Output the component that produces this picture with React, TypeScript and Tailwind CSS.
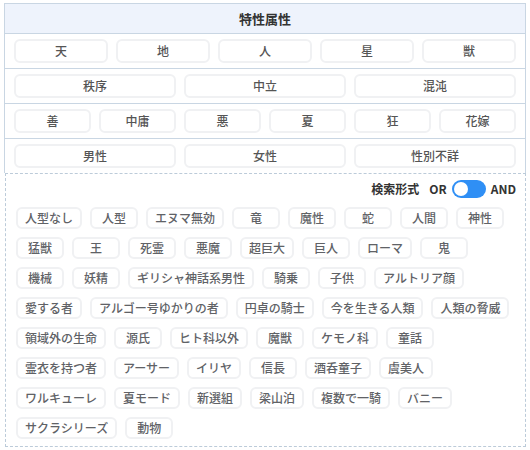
import React, { useState } from 'react'

const rows: string[][] = [
  ['天', '地', '人', '星', '獣'],
  ['秩序', '中立', '混沌'],
  ['善', '中庸', '悪', '夏', '狂', '花嫁'],
  ['男性', '女性', '性別不詳'],
]

const gridCols: Record<number, string> = {
  3: 'grid-cols-3',
  5: 'grid-cols-5',
  6: 'grid-cols-6',
}

const traits = [
  '人型なし', '人型', 'エヌマ無効', '竜', '魔性', '蛇', '人間', '神性',
  '猛獣', '王', '死霊', '悪魔', '超巨大', '巨人', 'ローマ', '鬼',
  '機械', '妖精', 'ギリシャ神話系男性', '騎乗', '子供', 'アルトリア顔',
  '愛する者', 'アルゴー号ゆかりの者', '円卓の騎士', '今を生きる人類', '人類の脅威',
  '領域外の生命', '源氏', 'ヒト科以外', '魔獣', 'ケモノ科', '童話',
  '霊衣を持つ者', 'アーサー', 'イリヤ', '信長', '酒呑童子', '虞美人',
  'ワルキューレ', '夏モード', '新選組', '梁山泊', '複数で一騎', 'バニー',
  'サクラシリーズ', '動物',
]

function Toggle({ on, onChange }: { on: boolean; onChange: () => void }) {
  return (
    <button onClick={onChange} className="relative h-[18px] w-[34px] rounded-full bg-[#2f8ff5]">
      <span
        className={`absolute top-[2px] h-[14px] w-[14px] rounded-full bg-white ${on ? 'left-[18px]' : 'left-[2px]'}`}
      />
    </button>
  )
}

export default function App() {
  const [and, setAnd] = useState(false)

  return (
    <div
      className="w-[530px] h-[450px] bg-white pt-[3px]"
      style={{ fontFamily: '"Noto Sans CJK JP", "Noto Sans", sans-serif' }}
    >
      {/* attribute table */}
      <div className="ml-[4px] w-[522px] border-x border-t border-[#c9d6e3]">
        <div className="h-[30px] flex items-center justify-center bg-[#eef3fc] border-b border-[#c9d6e3] text-[13px] font-bold text-[#333]">
          特性属性
        </div>
        {rows.map((row, i) => (
          <div
            key={i}
            className={`grid ${gridCols[row.length]} gap-2 px-[9px] py-[5px] ${i < rows.length - 1 ? 'border-b border-[#c9d6e3]' : ''}`}
          >
            {row.map(label => (
              <button
                key={label}
                className="h-[24px] rounded-md border-2 border-[#f0f1f3] bg-white text-[12px] font-medium text-[#555]"
              >
                {label}
              </button>
            ))}
          </div>
        ))}
      </div>

      {/* traits box */}
      <div className="ml-[5px] w-[521px] border border-dashed border-[#bccbd9] pl-[10px] pr-[9px] pt-[5px] pb-[7px]">
        <div className="h-[20px] mb-2 flex items-center justify-end text-[12px] font-bold text-[#333]">
          <span>検索形式</span>
          <span className="ml-[10px] mr-[5px]">OR</span>
          <Toggle on={and} onChange={() => setAnd(v => !v)} />
          <span className="ml-[5px]">AND</span>
        </div>
        <div className="flex flex-wrap gap-x-2 gap-y-2">
          {traits.map(t => (
            <span
              key={t}
              className="h-[22px] min-w-[48px] px-[7px] flex items-center justify-center rounded-md border-2 border-[#f0f1f3] bg-white text-[12px] font-medium text-[#606266]"
            >
              {t}
            </span>
          ))}
        </div>
      </div>
    </div>
  )
}
